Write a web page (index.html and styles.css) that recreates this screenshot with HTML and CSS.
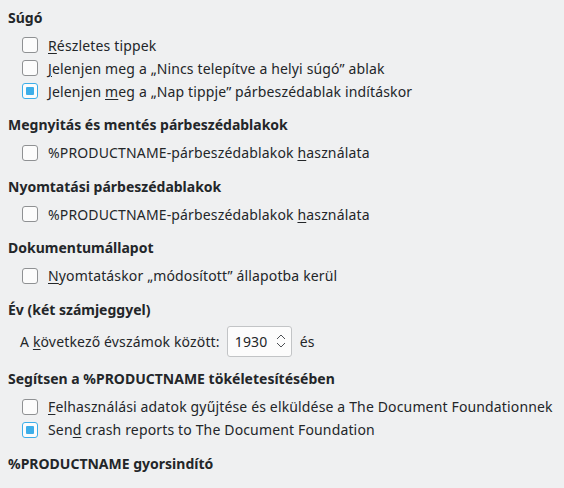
FILE: index.html
```html
<!DOCTYPE html>
<html lang="hu">
<head>
    <meta charset="UTF-8">
    <title>Általános beállítások</title>
    <link rel="stylesheet" href="styles.css">
</head>
<body>
    <div class="page">
        <div class="section">
            <div class="heading">Súgó</div>
            <label class="row"><span class="box"></span><span><u>R</u>észletes tippek</span></label>
            <label class="row"><span class="box"></span><span><u>J</u>elenjen meg a „Nincs telepítve a helyi súgó” ablak</span></label>
            <label class="row"><span class="box checked"></span><span>Jelenjen <u>m</u>eg a „Nap tippje” párbeszédablak indításkor</span></label>
        </div>

        <div class="section">
            <div class="heading">Megnyitás és mentés párbeszédablakok</div>
            <label class="row"><span class="box"></span><span>%PRODUCTNAME-párbeszédablakok <u>h</u>asználata</span></label>
        </div>

        <div class="section">
            <div class="heading">Nyomtatási párbeszédablakok</div>
            <label class="row"><span class="box"></span><span>%PRODUCTNAME-párbeszédablakok <u>h</u>asználata</span></label>
        </div>

        <div class="section">
            <div class="heading">Dokumentumállapot</div>
            <label class="row"><span class="box"></span><span><u>N</u>yomtatáskor „módosított” állapotba kerül</span></label>
        </div>

        <div class="section">
            <div class="heading">Év (két számjeggyel)</div>
            <div class="year-row">
                <span>A <u>k</u>övetkező évszámok között:</span>
                <div class="spin">
                    <span class="spin-value">1930</span>
                    <svg class="spin-arrows" width="10" height="18" viewBox="0 0 10 18">
                        <path d="M1 7 L5 3 L9 7" fill="none" stroke="#4d5054" stroke-width="1"/>
                        <path d="M1 11 L5 15 L9 11" fill="none" stroke="#4d5054" stroke-width="1"/>
                    </svg>
                </div>
                <span>és</span>
            </div>
        </div>

        <div class="section">
            <div class="heading">Segítsen a %PRODUCTNAME tökéletesítésében</div>
            <label class="row"><span class="box"></span><span><u>F</u>elhasználási adatok gyűjtése és elküldése a The Document Foundationnek</span></label>
            <label class="row"><span class="box checked"></span><span>Sen<u>d</u> crash reports to The Document Foundation</span></label>
        </div>

        <div class="section">
            <div class="heading">%PRODUCTNAME gyorsindító</div>
        </div>
    </div>
</body>
</html>
```

FILE: styles.css
```css
body {
    margin: 0;
    background: #eff0f1;
    color: #232629;
    font-family: 'Noto Sans', sans-serif;
    font-size: 14px;
}
.page {
    padding: 8.5px 8px 0 8px;
}
.section {
    margin-bottom: 13.5px;
}
.heading {
    font-weight: bold;
    line-height: 18px;
    height: 18px;
    margin-bottom: 7px;
}
.row {
    display: flex;
    align-items: center;
    height: 23px;
    padding-left: 14px;
    white-space: nowrap;
    letter-spacing: 0.15px;
}
.box {
    width: 14px;
    height: 14px;
    border: 1px solid #8f9193;
    border-radius: 3px;
    background: #fcfcfc;
    margin-right: 10px;
    flex-shrink: 0;
    position: relative;
}
.box.checked {
    border-color: #3daee9;
}
.box.checked::after {
    content: "";
    position: absolute;
    left: 3px;
    top: 3px;
    width: 8px;
    height: 8px;
    border-radius: 1px;
    background: #3daee9;
}
u {
    text-decoration: underline;
    text-underline-offset: 2px;
}
.year-row {
    display: flex;
    align-items: center;
    height: 31px;
    padding-left: 12px;
    letter-spacing: 0.15px;
}
.spin {
    display: flex;
    align-items: center;
    justify-content: space-between;
    box-sizing: border-box;
    width: 65px;
    height: 31px;
    margin: 0 8px 0 7px;
    padding: 0 5px 0 7px;
    background: #fcfcfc;
    border: 1px solid #c2c4c6;
    border-radius: 3px;
}
.spin-arrows {
    display: block;
}
```
